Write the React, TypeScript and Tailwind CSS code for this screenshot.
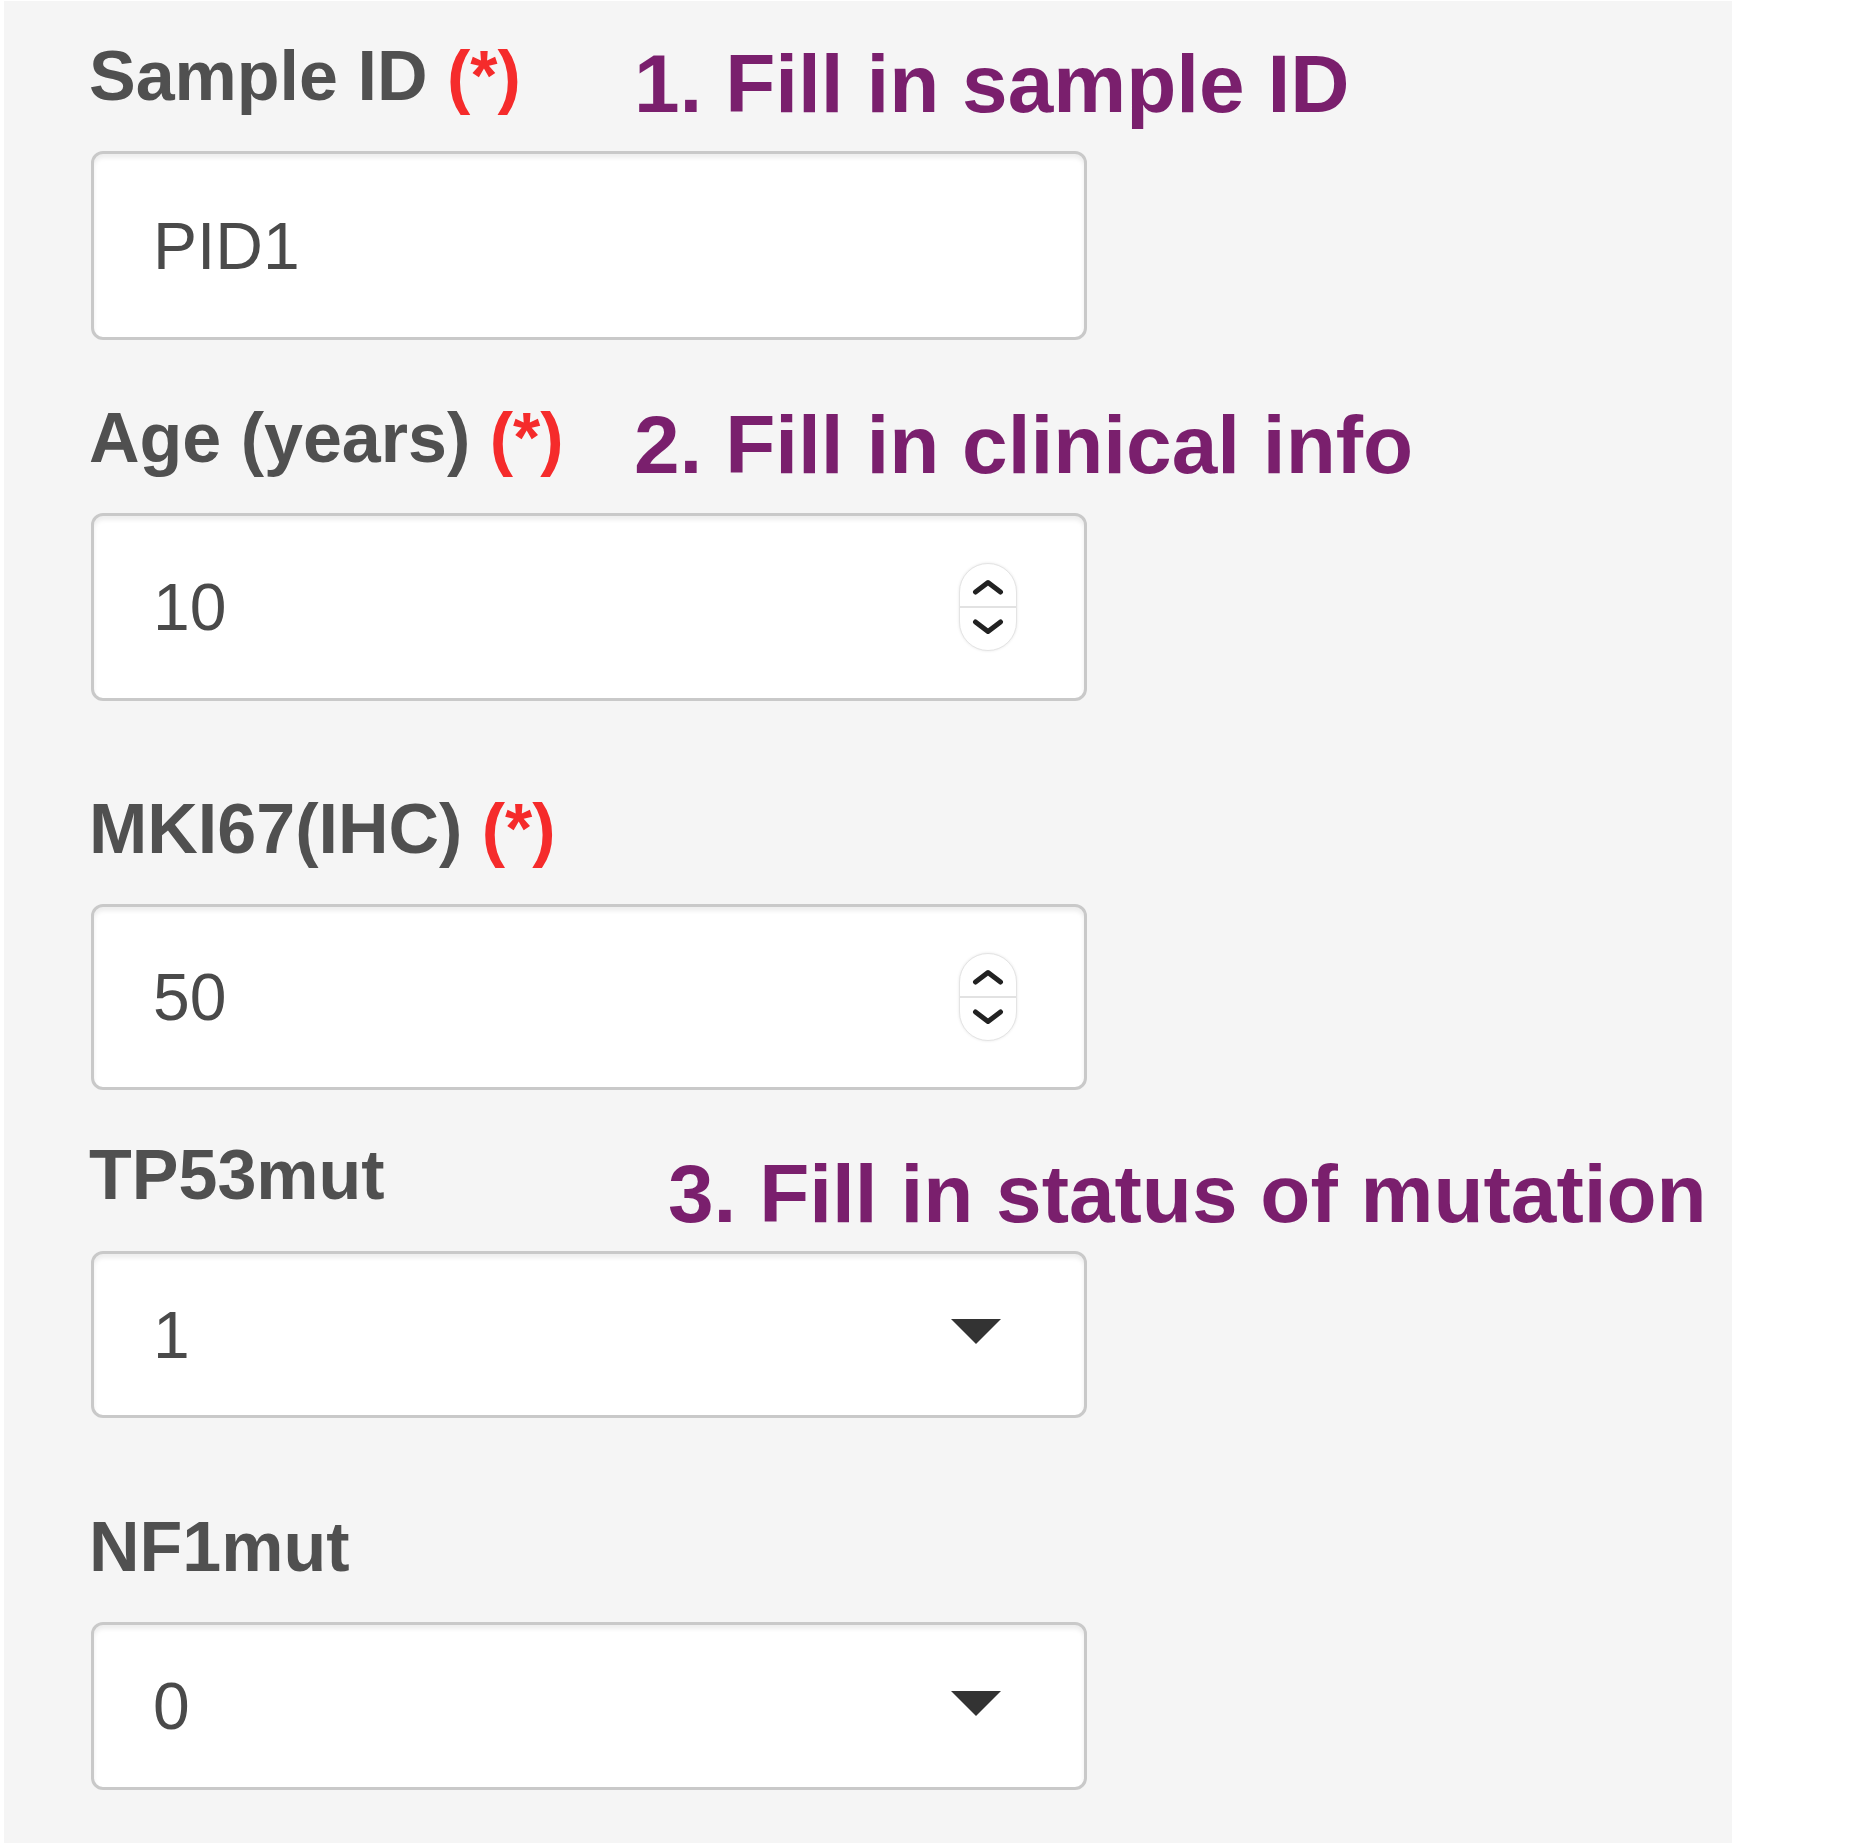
import type { ReactNode } from 'react'

// Formulario tipo Shiny (bootstrap 3) ampliado, con anotaciones en violeta.

function Req() {
  return <span className="text-[#f52b2b]"> (*)</span>
}

function Label({ children }: { children: ReactNode }) {
  return (
    <div className="whitespace-nowrap text-[70px] leading-[70px] font-bold text-[#505050]">{children}</div>
  )
}

function Note({ children, className = '' }: { children: ReactNode; className?: string }) {
  return (
    <div className={`whitespace-nowrap text-[82px] leading-[70px] font-bold text-[#7a1f6d] ${className}`}>
      {children}
    </div>
  )
}

function FieldBox({ className, children }: { className: string; children: ReactNode }) {
  return (
    <div
      className={`ml-[2px] flex w-[996px] items-center justify-between rounded-[12px] border-[3px] border-[#c9c9c9] bg-white pl-[59px] text-[66px] leading-[66px] text-[#4a4a4a] shadow-[inset_0_4px_4px_rgba(0,0,0,0.07)] ${className}`}
    >
      {children}
    </div>
  )
}

function Spinner() {
  return (
    <div className="mr-[67px] flex h-[88px] w-[58px] flex-col overflow-hidden rounded-[29px] border border-[#e4e4e4] bg-white shadow-[0_0_3px_rgba(0,0,0,0.10)]">
      <div className="flex flex-1 items-end justify-center border-b-2 border-[#e2e2e2] pb-[11px]">
        <svg width="32" height="16" viewBox="0 0 32 16">
          <polyline points="3.5,13 16,3.5 28.5,13" fill="none" stroke="#222" strokeWidth="5" strokeLinecap="round" strokeLinejoin="round" />
        </svg>
      </div>
      <div className="flex flex-1 items-start justify-center pt-[11px]">
        <svg width="32" height="16" viewBox="0 0 32 16">
          <polyline points="3.5,3 16,12.5 28.5,3" fill="none" stroke="#222" strokeWidth="5" strokeLinecap="round" strokeLinejoin="round" />
        </svg>
      </div>
    </div>
  )
}

function Caret() {
  return (
    <svg className="mr-[83px] mb-[6px]" width="50" height="25" viewBox="0 0 50 25">
      <polygon points="0,0 50,0 25,25" fill="#333" />
    </svg>
  )
}

export default function App() {
  return (
    <div className="min-h-screen bg-white pl-[4px] pt-[1px] font-['Liberation_Sans',Arial,sans-serif]">
      <div className="h-[1842px] w-[1728px] bg-[#f5f5f5] pl-[85px] pt-[40px]">
        {/* 1 */}
        <div className="grid h-[70px] grid-cols-[545px_1fr] items-start">
          <Label>
            Sample ID<Req />
          </Label>
          <Note className="mt-[8px]">1. Fill in sample ID</Note>
        </div>
        <FieldBox className="mt-[40px] h-[189px]">
          <span>PID1</span>
        </FieldBox>

        {/* 2 */}
        <div className="mt-[63px] grid h-[70px] grid-cols-[545px_1fr] items-start">
          <Label>
            Age (years)<Req />
          </Label>
          <Note className="mt-[7px]">2. Fill in clinical info</Note>
        </div>
        <FieldBox className="mt-[40px] h-[188px]">
          <span>10</span>
          <Spinner />
        </FieldBox>

        {/* 3 */}
        <div className="mt-[93px] h-[70px]">
          <Label>
            MKI67(IHC)<Req />
          </Label>
        </div>
        <FieldBox className="mt-[40px] h-[186px]">
          <span>50</span>
          <Spinner />
        </FieldBox>

        {/* 4 */}
        <div className="mt-[50px] grid h-[70px] grid-cols-[545px_1fr] items-start">
          <Label>TP53mut</Label>
          <Note className="ml-[34px] mt-[19px]">3. Fill in status of mutation</Note>
        </div>
        <FieldBox className="mt-[41px] h-[167px]">
          <span>1</span>
          <Caret />
        </FieldBox>

        {/* 5 */}
        <div className="mt-[94px] h-[70px]">
          <Label>NF1mut</Label>
        </div>
        <FieldBox className="mt-[40px] h-[168px]">
          <span>0</span>
          <Caret />
        </FieldBox>
      </div>
    </div>
  )
}
